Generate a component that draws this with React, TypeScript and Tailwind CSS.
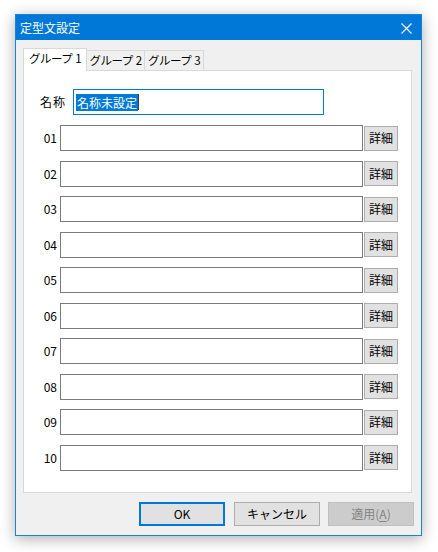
import React from 'react';

const rows = ['01', '02', '03', '04', '05', '06', '07', '08', '09', '10'];

const font = { fontFamily: '"Noto Sans CJK JP", "Noto Sans", sans-serif' };

const App: React.FC = () => {
  return (
    <div className="min-h-[552px] w-[438px] bg-white pl-[15px] pt-[14px]" style={font}>
      <div className="flex h-[522px] w-[407px] flex-col border border-[#1883d7] bg-[#f0f0f0] text-[12px] text-black shadow-[0_3px_14px_rgba(0,0,0,0.32)]">
        {/* title bar */}
        <div className="flex h-[25px] items-center justify-between bg-[#0078d7] pl-[4px] pr-[9px] text-white">
          <span className="leading-none">定型文設定</span>
          <svg width="11" height="11" viewBox="0 0 11 11" className="mt-[1px]">
            <path d="M0.5 0.5 L10.5 10.5 M10.5 0.5 L0.5 10.5" stroke="white" strokeWidth="1.1" />
          </svg>
        </div>

        {/* body */}
        <div className="flex flex-1 flex-col pl-[7px] pr-[9px] pt-[8px]">
          {/* tabs */}
          <div className="relative z-10 -mb-px flex h-[23px] items-end text-[11.5px] tracking-[-0.5px]">
            <div className="flex h-[23px] w-[64px] items-center justify-center gap-[3px] border border-b-0 border-[#d9d9d9] bg-white pb-[2px]">
              <span>グループ</span>
              <span>1</span>
            </div>
            <div className="flex h-[21px] w-[58px] items-center justify-center gap-[3px] border border-l-0 border-[#d9d9d9] bg-[#f0f0f0]">
              <span>グループ</span>
              <span>2</span>
            </div>
            <div className="flex h-[21px] w-[59px] items-center justify-center gap-[3px] border border-l-0 border-[#d9d9d9] bg-[#f0f0f0]">
              <span>グループ</span>
              <span>3</span>
            </div>
          </div>

          {/* panel */}
          <div className="flex h-[423px] w-[389px] flex-col border border-[#d9d9d9] bg-white pl-[16px] pt-[18px]">
            <div className="flex items-center">
              <span className="w-[33px] tracking-[1px]">名称</span>
              <div className="flex h-[26px] w-[251px] items-center border border-[#0078d7] px-[2px]">
                <span className="bg-[#0078d7] px-[1px] leading-[17px] text-white">名称未設定</span>
                <span className="h-[16px] w-px bg-[#4a3a20]" />
              </div>
            </div>

            <div className="-ml-[16px] mt-[10px] flex flex-col gap-[9.5px]">
              {rows.map((r) => (
                <div key={r} className="flex h-[26px] items-center">
                  <span className="w-[36px] pr-[3px] text-right">{r}</span>
                  <div className="h-[26px] w-[303px] border border-[#7a7a7a] bg-white" />
                  <button className="ml-px flex h-[25px] w-[34px] items-center justify-center border border-[#adadad] bg-[#e1e1e1] leading-none">
                    詳細
                  </button>
                </div>
              ))}
            </div>
          </div>

          {/* buttons */}
          <div className="mt-[9px] flex justify-end">
            <div className="-mr-[2px] flex">
              <button className="flex h-[24px] w-[86px] items-center justify-center border-2 border-[#0078d7] bg-[#e1e1e1]">
                OK
              </button>
              <button className="ml-[9px] flex h-[24px] w-[86px] items-center justify-center border border-[#adadad] bg-[#e1e1e1]">
                キャンセル
              </button>
              <button className="ml-[8px] flex h-[24px] w-[86px] items-center justify-center border border-[#bfbfbf] bg-[#cccccc] text-[#838383]">
                適用(<span className="underline underline-offset-2">A</span>)
              </button>
            </div>
          </div>
        </div>
      </div>
    </div>
  );
};

export default App;
